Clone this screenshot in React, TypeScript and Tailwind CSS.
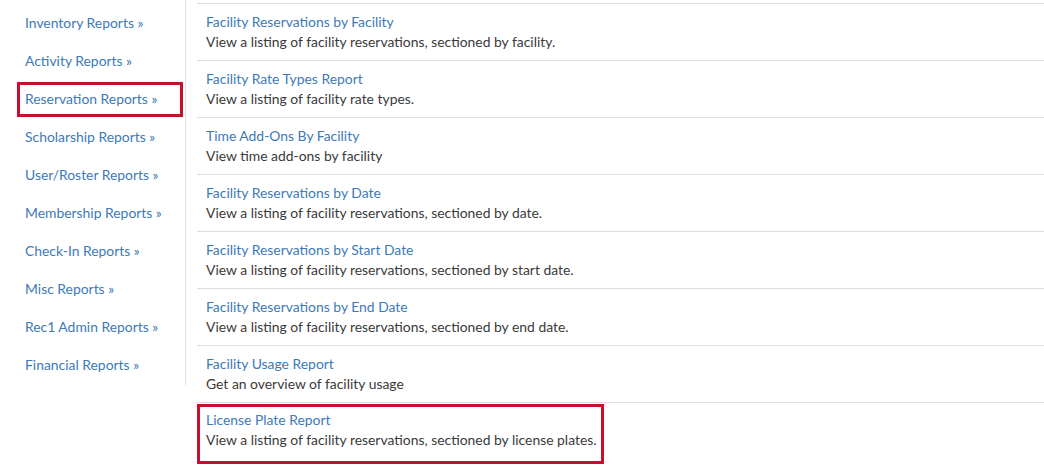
export default function App() {
  const nav = ["Inventory Reports","Activity Reports","Reservation Reports","Scholarship Reports","User/Roster Reports","Membership Reports","Check-In Reports","Misc Reports","Rec1 Admin Reports","Financial Reports"];
  const rows = [
    ["Facility Reservations by Facility","View a listing of facility reservations, sectioned by facility."],
    ["Facility Rate Types Report","View a listing of facility rate types."],
    ["Time Add-Ons By Facility","View time add-ons by facility"],
    ["Facility Reservations by Date","View a listing of facility reservations, sectioned by date."],
    ["Facility Reservations by Start Date","View a listing of facility reservations, sectioned by start date."],
    ["Facility Reservations by End Date","View a listing of facility reservations, sectioned by end date."],
    ["Facility Usage Report","Get an overview of facility usage"],
  ];
  return (
    <div className="flex w-[1044px] h-[472px] bg-white text-[13.9px] overflow-hidden whitespace-nowrap" style={{fontFamily:"Lato, 'Noto Sans', sans-serif"}}>
      <div className="w-[186px] h-[385px] border-r border-[#e0e0e0] pt-[4px] pl-[17px] shrink-0">
        {nav.map((n,i)=>(
          <div key={n} className="h-[38px] flex items-center">
            <div className={`h-[35px] w-[166px] border-[3px] pl-[5px] flex items-center text-[#3d7ab8] ${i===2?"border-[#c8102e]":"border-transparent"}`}>
              {n} »
            </div>
          </div>
        ))}
      </div>
      <div className="flex-1 ml-[11px] mt-[3px]">
        {rows.map(([t,d])=>(
          <div key={t} className="border-t border-[#dedede] pt-[8px] pb-[8px] pl-[9px] leading-[20px]">
            <div className="text-[#3d7ab8]">{t}</div>
            <div className="text-[#3a3a3a]">{d}</div>
          </div>
        ))}
        <div className="border-t border-[#dedede] pt-[1px] leading-[20px]">
          <div className="w-fit border-[3px] border-[#c8102e] pl-[6px] pr-[4px] pt-[3px] pb-[11px]">
            <div className="text-[#3d7ab8]">License Plate Report</div>
            <div className="text-[#3a3a3a]">View a listing of facility reservations, sectioned by license plates.</div>
          </div>
        </div>
      </div>
    </div>
  );
}
